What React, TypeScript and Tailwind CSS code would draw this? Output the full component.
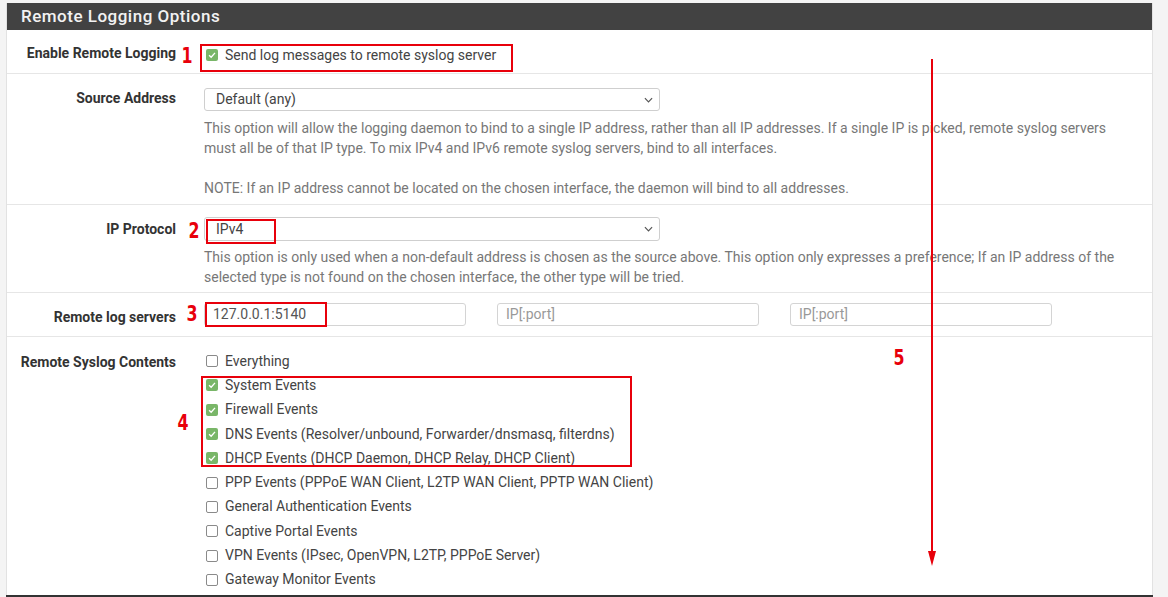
import React from 'react';

const font = { fontFamily: 'Roboto, "Liberation Sans", sans-serif' };

const Check: React.FC<{ checked?: boolean }> = ({ checked }) =>
  checked ? (
    <span className="flex h-[12px] w-[12px] shrink-0 items-center justify-center rounded-[2px] bg-[#79b668]">
      <svg viewBox="0 0 12 12" className="h-[10px] w-[10px]">
        <path d="M2.5 6.2 L5 8.6 L9.6 3.4" fill="none" stroke="#fff" strokeWidth="1.6" />
      </svg>
    </span>
  ) : (
    <span className="h-[12px] w-[12px] shrink-0 rounded-[2px] border border-[#8a8a8a] bg-white" />
  );

const CheckRow: React.FC<{ label: string; checked?: boolean }> = ({ label, checked }) => (
  <div className="flex h-[24.3px] items-center gap-[7px] pl-[2px] text-[14px] text-[#444]">
    <Check checked={checked} />
    <span>{label}</span>
  </div>
);

const Select: React.FC<{ value: string; h: string }> = ({ value, h }) => (
  <div className={`flex w-[456px] items-center justify-between rounded-[3px] border border-[#cfcfcf] bg-white pl-[11px] pr-[6px] text-[14px] text-[#444] ${h}`}>
    <span>{value}</span>
    <svg viewBox="0 0 10 6" className="h-[6px] w-[9px]">
      <path d="M1 1 L5 5 L9 1" fill="none" stroke="#555" strokeWidth="1.3" />
    </svg>
  </div>
);

const Label: React.FC<{ children: React.ReactNode; className?: string }> = ({ children, className }) => (
  <div className={`w-[197px] shrink-0 pr-[28px] text-right text-[14px] font-bold text-[#333] ${className ?? ''}`}>{children}</div>
);

const Mark: React.FC<{ n: string; className: string }> = ({ n, className }) => (
  <span
    className={`absolute text-[22px] font-bold leading-none text-[#e8000b] ${className}`}
    style={{ fontFamily: '"Liberation Sans Narrow", "DejaVu Sans Condensed", sans-serif', transform: 'scaleX(0.8)' }}
  >
    {n}
  </span>
);

const contents: [string, boolean][] = [
  ['Everything', false],
  ['System Events', true],
  ['Firewall Events', true],
  ['DNS Events (Resolver/unbound, Forwarder/dnsmasq, filterdns)', true],
  ['DHCP Events (DHCP Daemon, DHCP Relay, DHCP Client)', true],
  ['PPP Events (PPPoE WAN Client, L2TP WAN Client, PPTP WAN Client)', false],
  ['General Authentication Events', false],
  ['Captive Portal Events', false],
  ['VPN Events (IPsec, OpenVPN, L2TP, PPPoE Server)', false],
  ['Gateway Monitor Events', false],
];

export default function App() {
  return (
    <div className="relative h-[597px] w-[1168px] overflow-hidden bg-[#f4f4f4] pl-[6px] pr-[15px] pt-[3px]" style={font}>
      <div className="h-[592px] border-x border-[#e2e2e2] bg-white">
        <div className="flex h-[27px] items-center bg-[#424242] pl-[14px] text-[17px] font-medium tracking-[0.5px] text-[#f2f2f2]">
          Remote Logging Options
        </div>

        <div className="flex h-[44px] items-start border-b border-[#e6e6e6] pt-[13px]">
          <Label>Enable Remote Logging</Label>
          <CheckRow label="Send log messages to remote syslog server" checked />
        </div>

        <div className="flex h-[131px] border-b border-[#e6e6e6] pt-[14px]">
          <Label>Source Address</Label>
          <div className="w-[924px]">
            <Select value="Default (any)" h="h-[23px]" />
            <div className="mt-[7px] text-[14px] leading-[20px] text-[#777]">
              This option will allow the logging daemon to bind to a single IP address, rather than all IP addresses. If a single IP is picked, remote syslog servers must all be of that IP type. To mix IPv4 and IPv6 remote syslog servers, bind to all interfaces.
              <br />
              <br />
              NOTE: If an IP address cannot be located on the chosen interface, the daemon will bind to all addresses.
            </div>
          </div>
        </div>

        <div className="flex h-[88px] border-b border-[#e6e6e6] pt-[12px]">
          <Label className="pt-[2px]">IP Protocol</Label>
          <div className="w-[924px]">
            <Select value="IPv4" h="h-[24px]" />
            <div className="mt-[6px] text-[14px] leading-[20px] text-[#777]">
              This option is only used when a non-default address is chosen as the source above. This option only expresses a preference; If an IP address of the selected type is not found on the chosen interface, the other type will be tried.
            </div>
          </div>
        </div>

        <div className="flex h-[44px] items-center border-b border-[#e6e6e6]">
          <Label className="pt-[6px]">Remote log servers</Label>
          <div className="flex gap-[31px]">
            <div className="flex h-[23px] w-[262px] items-center rounded-[3px] border border-[#d4d4d4] pl-[8px] text-[14px] text-[#555]">127.0.0.1:5140</div>
            <div className="flex h-[23px] w-[262px] items-center rounded-[3px] border border-[#d4d4d4] pl-[8px] text-[14px] text-[#999]">IP[:port]</div>
            <div className="flex h-[23px] w-[262px] items-center rounded-[3px] border border-[#d4d4d4] pl-[8px] text-[14px] text-[#999]">IP[:port]</div>
          </div>
        </div>

        <div className="flex pt-[12px]">
          <Label className="pt-[3px]">Remote Syslog Contents</Label>
          <div className="flex flex-col">
            {contents.map(([label, checked]) => (
              <CheckRow key={label} label={label} checked={checked} />
            ))}
          </div>
        </div>
      </div>
      <div className="h-[2px] bg-[#333]" />

      {/* annotations */}
      <div className="absolute left-[200px] top-[44px] h-[28px] w-[313px] border-2 border-[#e8000b]" />
      <div className="absolute left-[206px] top-[219px] h-[25px] w-[70px] border-2 border-[#e8000b]" />
      <div className="absolute left-[205px] top-[302px] h-[25px] w-[122px] border-2 border-[#e8000b]" />
      <div className="absolute left-[201px] top-[376px] h-[91px] w-[431px] border-2 border-[#e8000b]" />
      <Mark n="1" className="left-[180px] top-[45px]" />
      <Mark n="2" className="left-[187px] top-[220px]" />
      <Mark n="3" className="left-[185px] top-[303px]" />
      <Mark n="4" className="left-[176px] top-[412px]" />
      <Mark n="5" className="left-[892px] top-[347px]" />
      <svg className="absolute left-[925px] top-[59px]" width="14" height="508" viewBox="0 0 14 508">
        <line x1="7" y1="0" x2="7" y2="496" stroke="#e8000b" strokeWidth="2" />
        <path d="M3 492 L11 492 L7 507 Z" fill="#e8000b" />
      </svg>
    </div>
  );
}
